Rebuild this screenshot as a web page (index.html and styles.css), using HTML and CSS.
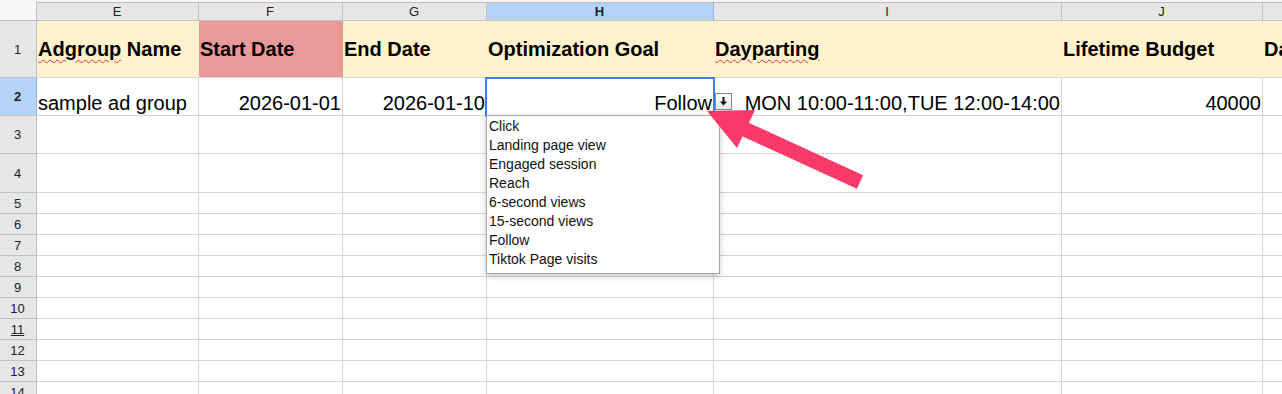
FILE: index.html
```html
<!DOCTYPE html>
<html lang="en">
<head>
    <meta charset="UTF-8">
    <meta name="viewport" content="width=device-width, initial-scale=1.0">
    <title>Adgroup sheet</title>
<link rel="stylesheet" href="styles.css">
</head>
<body>

    <div class="page">
        <div class="sheet">
            <!-- column letters -->
            <div class="cell corner"></div>
            <div class="cell col">E</div>
            <div class="cell col">F</div>
            <div class="cell col">G</div>
            <div class="cell col col-active">H</div>
            <div class="cell col">I</div>
            <div class="cell col">J</div>
            <div class="cell col"></div>

            <!-- row 1 : titles -->
            <div class="cell row">1</div>
            <div class="cell title"><span class="typo">Adgroup</span>&nbsp;Name</div>
            <div class="cell title start">Start Date</div>
            <div class="cell title">End Date</div>
            <div class="cell title">Optimization Goal</div>
            <div class="cell title"><span class="typo">Dayparting</span></div>
            <div class="cell title">Lifetime Budget</div>
            <div class="cell title">Daily Budget</div>

            <!-- row 2 : data -->
            <div class="cell row row-active">2</div>
            <div class="cell">sample ad group</div>
            <div class="cell num">2026-01-01</div>
            <div class="cell num">2026-01-10</div>
            <div class="cell num sel">
                Follow
                <span class="pick">
                    <svg width="15" height="15" viewBox="0 0 15 15"><rect x="6.5" y="3" width="2" height="5" fill="#111"/><polygon points="4,7.5 11,7.5 7.5,11.5" fill="#111"/></svg>
                </span>
                <ul class="list">
                    <li>Click</li>
                    <li>Landing page view</li>
                    <li>Engaged session</li>
                    <li>Reach</li>
                    <li>6-second views</li>
                    <li>15-second views</li>
                    <li>Follow</li>
                    <li>Tiktok Page visits</li>
                </ul>
            </div>
            <div class="cell num">MON 10:00-11:00,TUE 12:00-14:00</div>
            <div class="cell num">40000</div>
            <div class="cell"></div>

            <!-- empty rows -->
            <div class="cell row">3</div><div class="cell"></div><div class="cell"></div><div class="cell"></div><div class="cell"></div><div class="cell"></div><div class="cell"></div><div class="cell"></div>
            <div class="cell row">4</div><div class="cell"></div><div class="cell"></div><div class="cell"></div><div class="cell"></div><div class="cell"></div><div class="cell"></div><div class="cell"></div>
            <div class="cell row">5</div><div class="cell"></div><div class="cell"></div><div class="cell"></div><div class="cell"></div><div class="cell"></div><div class="cell"></div><div class="cell"></div>
            <div class="cell row">6</div><div class="cell"></div><div class="cell"></div><div class="cell"></div><div class="cell"></div><div class="cell"></div><div class="cell"></div><div class="cell"></div>
            <div class="cell row">7</div><div class="cell"></div><div class="cell"></div><div class="cell"></div><div class="cell"></div><div class="cell"></div><div class="cell"></div><div class="cell"></div>
            <div class="cell row">8</div><div class="cell"></div><div class="cell"></div><div class="cell"></div><div class="cell"></div><div class="cell"></div><div class="cell"></div><div class="cell"></div>
            <div class="cell row">9</div><div class="cell"></div><div class="cell"></div><div class="cell"></div><div class="cell"></div><div class="cell"></div><div class="cell"></div><div class="cell"></div>
            <div class="cell row">10</div><div class="cell"></div><div class="cell"></div><div class="cell"></div><div class="cell"></div><div class="cell"></div><div class="cell"></div><div class="cell"></div>
            <div class="cell row"><u>11</u></div><div class="cell"></div><div class="cell"></div><div class="cell"></div><div class="cell"></div><div class="cell"></div><div class="cell"></div><div class="cell"></div>
            <div class="cell row">12</div><div class="cell"></div><div class="cell"></div><div class="cell"></div><div class="cell"></div><div class="cell"></div><div class="cell"></div><div class="cell"></div>
            <div class="cell row">13</div><div class="cell"></div><div class="cell"></div><div class="cell"></div><div class="cell"></div><div class="cell"></div><div class="cell"></div><div class="cell"></div>
            <div class="cell row">14</div><div class="cell"></div><div class="cell"></div><div class="cell"></div><div class="cell"></div><div class="cell"></div><div class="cell"></div><div class="cell"></div>
        </div>

        <!-- callout arrow pointing at the dropdown -->
        <svg class="callout" width="1282" height="394" viewBox="0 0 1282 394">
            <line x1="860" y1="182" x2="740" y2="127" stroke="#f93a68" stroke-width="15"/>
            <polygon points="707,111 755,110 737,148" fill="#f93a68"/>
        </svg>
    </div>

</body>
</html>
```

FILE: styles.css
```css
*,*::before,*::after {
    box-sizing: border-box;
    margin: 0;
    padding: 0;
}

html, body {
    background-color: #f6f6f6;
    overflow: hidden;
}

.page {
    position: relative;
    width: 1282px;
    height: 394px;
    padding-top: 2px;
    font-family: 'Liberation Sans', Arial, sans-serif;
    color: #000;
}

.sheet {
    display: grid;
    grid-template-columns: 37px 162px 144px 144px 227px 348px 201px 100px;
    grid-template-rows: 19px 57px 38px 38px 39px repeat(10, 21px);
}

.cell {
    display: flex;
    align-items: flex-end;
    padding: 0 2px 0 1px;
    background-color: #fff;
    border-right: 1px solid #d6d6d6;
    border-bottom: 1px solid #d6d6d6;
    font-size: 20px;
    line-height: 23px;
    white-space: nowrap;
    overflow: hidden;
}

.num {
    justify-content: flex-end;
    padding-right: 1px;
}

/* headers */
.corner {
    background-color: #f6f6f6;
    border-color: #c2c2c2;
}

.col {
    justify-content: center;
    align-items: center;
    background-color: #e6e6e6;
    border-top: 1px solid #bdbdbd;
    border-right-color: #c2c2c2;
    border-bottom-color: #c2c2c2;
    font-size: 13px;
    line-height: 15px;
    color: #222;
}

.row {
    justify-content: center;
    align-items: center;
    background-color: #e6e6e6;
    border-right-color: #c2c2c2;
    border-bottom-color: #c2c2c2;
    font-size: 13px;
    line-height: 15px;
    color: #222;
}

.col-active, .row-active {
    background-color: #b4d3f7;
    border-right-color: #8fb6e6;
    font-weight: bold;
}

/* title row */
.title {
    align-items: center;
    background-color: #fff2cc;
    border-right-color: #fff2cc;
    font-weight: bold;
}

.title.start {
    background-color: #ea9999;
    border-right-color: #ea9999;
}

.typo {
    text-decoration: underline wavy #e0302c;
    text-decoration-thickness: 1px;
    text-underline-offset: 3px;
}

/* selected cell with its list */
.sel {
    position: relative;
    overflow: visible;
}

.sel::after {
    content: "";
    position: absolute;
    top: -1px;
    left: -2px;
    right: -2px;
    bottom: -2px;
    border: 2px solid #3a7ef0;
}

.pick {
    position: absolute;
    left: 228px;
    top: 15px;
    width: 17px;
    height: 17px;
    display: flex;
    justify-content: center;
    align-items: center;
    background: linear-gradient(#fdfdfd, #e9e9e9);
    border: 1px solid #8a8a8a;
    z-index: 2;
}

.list {
    position: absolute;
    left: -1px;
    top: 37px;
    width: 234px;
    padding: 1px 0 4px 2px;
    list-style: none;
    background-color: #fff;
    border: 1px solid #a8a8a8;
    box-shadow: 0 2px 6px rgba(0, 0, 0, 0.22);
    font-size: 14px;
    line-height: 19px;
    color: #111;
    z-index: 2;
}

.callout {
    position: absolute;
    left: 0;
    top: 0;
    pointer-events: none;
    z-index: 3;
}
```
